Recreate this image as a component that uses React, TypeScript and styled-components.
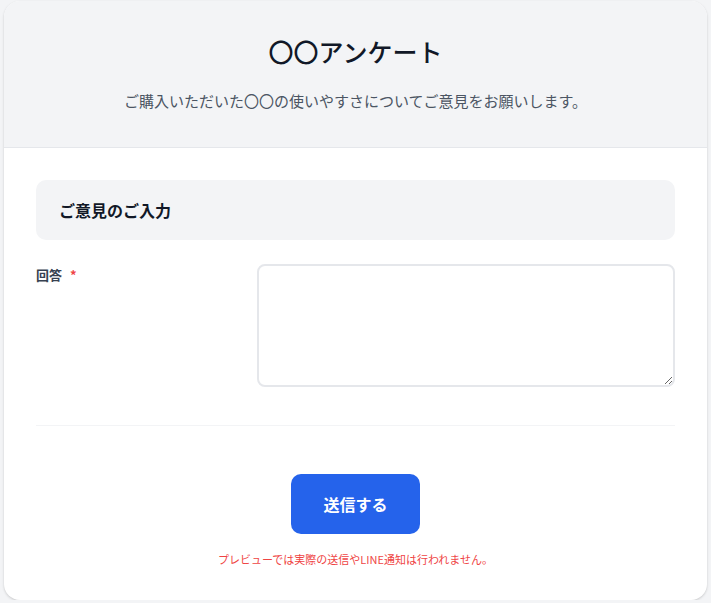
import styled, { createGlobalStyle } from 'styled-components'

const GlobalStyle = createGlobalStyle`
    html, body {
        margin: 0;
        padding: 0;
        background: #f3f4f6;
    }
    body {
        font-family: 'Noto Sans CJK JP', 'Noto Sans', sans-serif;
        color: #111827;
    }
`

const Card = styled.div`
    margin: 1px 4px 0 4px;
    height: 599px;
    box-sizing: border-box;
    background: #ffffff;
    border-radius: 16px;
    box-shadow: 0 1px 3px rgba(0,0,0,0.12), 0 1px 2px rgba(0,0,0,0.06);
    overflow: hidden;
    display: flex;
    flex-direction: column;
`

const Header = styled.header`
    background: #f3f4f6;
    border-bottom: 1px solid #e5e7eb;
    padding: 32px 32px 34px;
    text-align: center;
`

const Title = styled.h1`
    margin: 0;
    font-size: 25px;
    line-height: 36px;
    font-weight: 500;
    color: #111827;
`

const Subtitle = styled.p`
    margin: 20px 0 0;
    font-size: 15px;
    line-height: 24px;
    color: #4b5563;
`

const Body = styled.form`
    padding: 32px 32px 0;
    display: flex;
    flex-direction: column;
`

const SectionHead = styled.div`
    background: #f3f4f6;
    border-radius: 10px;
    padding: 18px 23px;
    font-size: 16px;
    line-height: 24px;
    font-weight: 700;
    color: #111827;
`

const FieldRow = styled.div`
    margin-top: 24px;
    padding-bottom: 38px;
    border-bottom: 1px solid #f3f4f6;
    display: grid;
    grid-template-columns: repeat(3, 1fr);
    column-gap: 24px;
`

const Label = styled.label`
    font-size: 13px;
    line-height: 20px;
    font-weight: 700;
    color: #374151;
    padding-top: 1px;
`

const Required = styled.span`
    color: #ef4444;
    margin-left: 8px;
`

const Answer = styled.textarea`
    grid-column: span 2;
    height: 123px;
    box-sizing: border-box;
    border: 2px solid #e5e7eb;
    border-radius: 8px;
    padding: 8px 12px;
    font-family: inherit;
    font-size: 14px;
    outline: none;
`

const Actions = styled.div`
    padding-top: 48px;
    display: flex;
    flex-direction: column;
    align-items: center;
`

const SubmitButton = styled.button`
    background: #2563eb;
    color: #ffffff;
    border: none;
    border-radius: 10px;
    padding: 18px 32px;
    font-family: inherit;
    font-size: 16px;
    line-height: 24px;
    font-weight: 700;
    cursor: pointer;
`

const Note = styled.p`
    margin: 17px 0 0;
    font-size: 11px;
    line-height: 16px;
    color: #ef4444;
`

export default function App() {
    return (
        <>
            <GlobalStyle />
            <Card>
                <Header>
                    <Title>〇〇アンケート</Title>
                    <Subtitle>ご購入いただいた〇〇の使いやすさについてご意見をお願いします。</Subtitle>
                </Header>
                <Body onSubmit={(e) => e.preventDefault()}>
                    <SectionHead>ご意見のご入力</SectionHead>
                    <FieldRow>
                        <Label htmlFor="answer">
                            回答<Required>*</Required>
                        </Label>
                        <Answer id="answer" />
                    </FieldRow>
                    <Actions>
                        <SubmitButton type="submit">送信する</SubmitButton>
                        <Note>プレビューでは実際の送信やLINE通知は行われません。</Note>
                    </Actions>
                </Body>
            </Card>
        </>
    )
}
